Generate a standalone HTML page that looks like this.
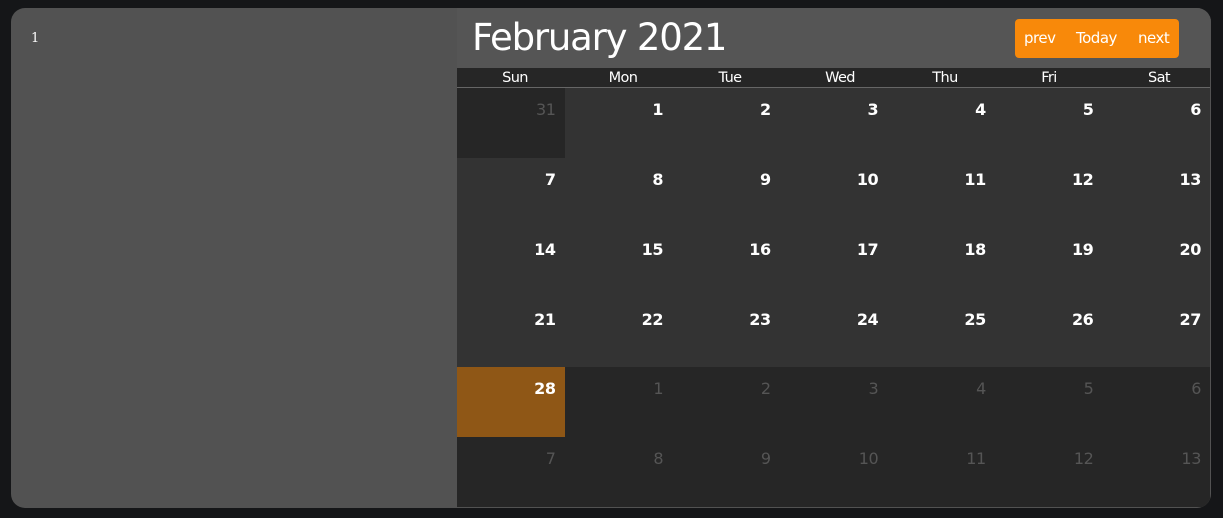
<!DOCTYPE html>
<html><head><meta charset="utf-8"><style>
*{margin:0;padding:0;box-sizing:border-box}
body{width:1223px;height:518px;background:#151618;font-family:"DejaVu Sans","Liberation Sans",sans-serif;position:relative;overflow:hidden}
.panel{position:absolute;left:11px;top:8px;width:1200px;height:500px;background:#525252;border-radius:14px;overflow:hidden}
.one{position:absolute;left:20px;top:23px;color:#fff;font-family:"DejaVu Serif","Liberation Serif",serif;font-size:13px}
.top{position:absolute;left:446px;top:0;width:754px;height:60px;background:#555}
.title{position:absolute;left:461px;top:8px;color:#fff;font-size:37px;letter-spacing:-1.2px}
.btns{position:absolute;left:1004px;top:11px;width:164px;height:39px;background:#f8890a;border-radius:4px;color:#fff;font-size:15px;letter-spacing:-0.5px}
.btns span{position:absolute;top:10px}
.hdr{position:absolute;left:446px;top:60px;width:753px;height:20px;background:#262626;border-bottom:1px solid #666}
.hdr span{position:absolute;top:2px;width:108px;text-align:center;color:#fff;font-size:14.5px;letter-spacing:-0.6px}
.grid{position:absolute;left:446px;top:80px;width:753px;height:419px;display:grid;grid-template-columns:repeat(7,1fr);grid-template-rows:repeat(6,1fr)}
.grid div{text-align:right;padding:12px 9px 0 0;font-size:16px;font-weight:bold;color:#fff;background:#333;letter-spacing:-0.4px}
.grid div.o{background:#262626;color:#555;font-weight:normal}
.grid div.t{background:#8f5716}
</style></head><body>
<div class="panel">
<div class="one">1</div>
<div class="top"></div>
<div class="title">February 2021</div>
<div class="btns"><span style="left:9px">prev</span><span style="left:61px">Today</span><span style="left:123px">next</span></div>
<div class="hdr">
<span style="left:4px">Sun</span><span style="left:112px">Mon</span><span style="left:219px">Tue</span><span style="left:329px">Wed</span><span style="left:434px">Thu</span><span style="left:538px">Fri</span><span style="left:648px">Sat</span>
</div>
<div class="grid">
<div class="o">31</div><div>1</div><div>2</div><div>3</div><div>4</div><div>5</div><div>6</div>
<div>7</div><div>8</div><div>9</div><div>10</div><div>11</div><div>12</div><div>13</div>
<div>14</div><div>15</div><div>16</div><div>17</div><div>18</div><div>19</div><div>20</div>
<div>21</div><div>22</div><div>23</div><div>24</div><div>25</div><div>26</div><div>27</div>
<div class="t">28</div><div class="o">1</div><div class="o">2</div><div class="o">3</div><div class="o">4</div><div class="o">5</div><div class="o">6</div>
<div class="o">7</div><div class="o">8</div><div class="o">9</div><div class="o">10</div><div class="o">11</div><div class="o">12</div><div class="o">13</div>
</div>
</div>
</body></html>
